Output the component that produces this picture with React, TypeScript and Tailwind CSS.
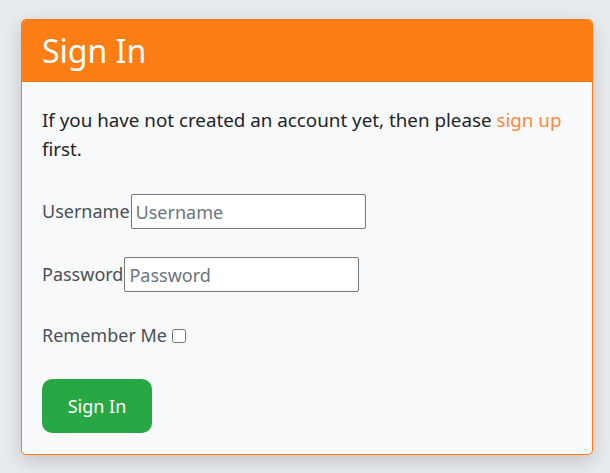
export default function App() {
  return (
    <div className="min-h-[473px] bg-[#e9ecef] pt-[19px] px-[21px] font-['Noto_Sans',sans-serif]">
      <div className="w-[572px] overflow-hidden rounded-[5px] border border-[#fd7e14] bg-[#f8f9fa] shadow-[0_6px_20px_rgba(0,0,0,0.18)]">
        <div className="flex h-[62px] items-center border-b border-[#e8700d] bg-[#fd7e14] px-[20px]">
          <h1 className="text-[32px] font-normal text-white">Sign In</h1>
        </div>
        <div className="px-[20px] pt-[24px] pb-[21px]">
          <p className="mb-[30px] text-[18.8px] leading-[29px] text-[#212529]">
            If you have not created an account yet, then please{" "}
            <a href="#" className="text-[#fd8a3a]">
              sign up
            </a>{" "}
            first.
          </p>
          <form className="flex flex-col gap-[28px] text-[18px] text-[#495057]">
            <div className="flex h-[35px] items-center gap-[1px]">
              <label htmlFor="username">Username</label>
              <input
                id="username"
                placeholder="Username"
                className="h-[35px] w-[235px] rounded-[2px] border border-[#767676] bg-white px-[4px] text-[18px] placeholder:text-[#6c757d]"
              />
            </div>
            <div className="flex h-[35px] items-center gap-[1px]">
              <label htmlFor="password">Password</label>
              <input
                id="password"
                type="password"
                placeholder="Password"
                className="h-[35px] w-[235px] rounded-[2px] border border-[#767676] bg-white px-[4px] text-[18px] placeholder:text-[#6c757d]"
              />
            </div>
            <div className="flex h-[31px] items-center gap-[5px]">
              <label htmlFor="remember">Remember Me</label>
              <input id="remember" type="checkbox" className="h-[14px] w-[14px]" />
            </div>
            <div>
              <button
                type="button"
                className="h-[54px] w-[110px] rounded-[10px] bg-[#28a745] text-[18px] text-white"
              >
                Sign In
              </button>
            </div>
          </form>
        </div>
      </div>
    </div>
  );
}
